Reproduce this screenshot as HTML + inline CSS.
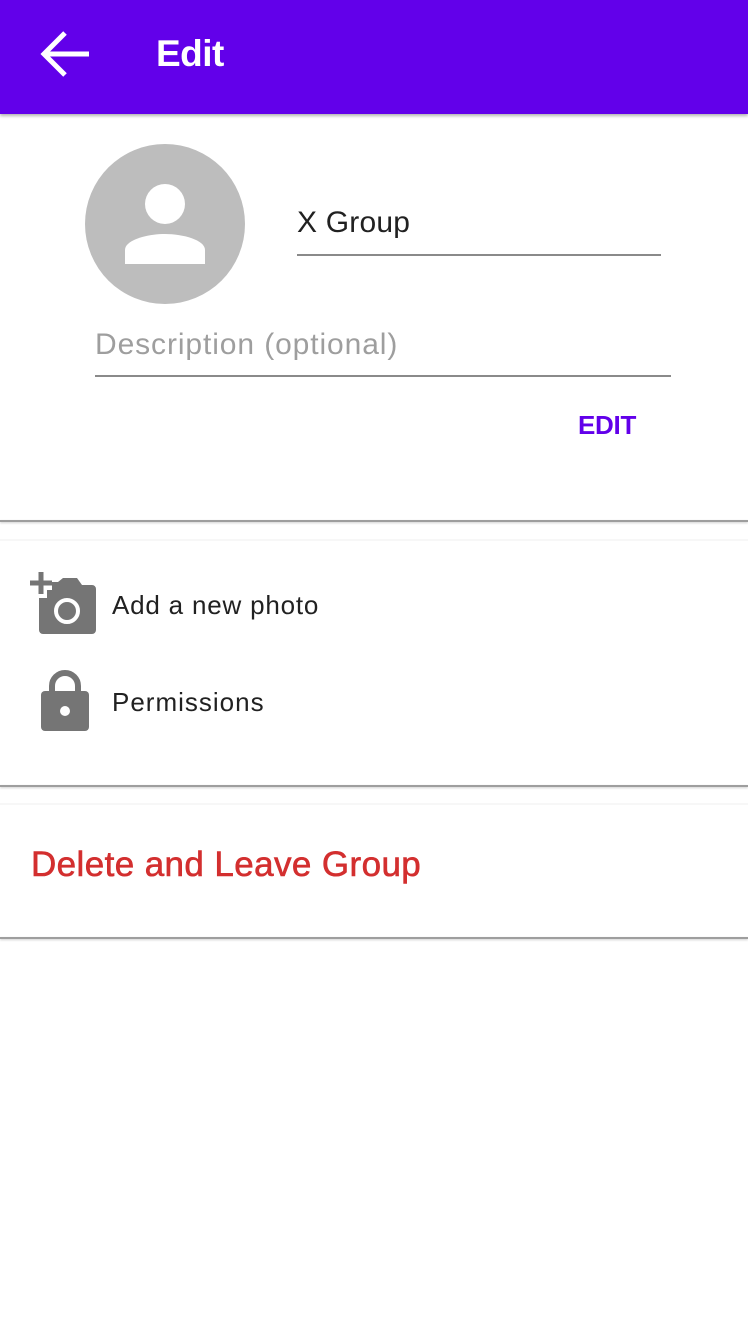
<!DOCTYPE html>
<html><head><style>
body{margin:0;width:748px;height:1324px;background:#fff;font-family:"Liberation Sans",sans-serif;position:relative;overflow:hidden}
.a{position:absolute}
.hdr{left:0;top:0;width:748px;height:114px;background:#6200ea;box-shadow:0 2px 3px rgba(0,0,0,.3)}
.sep{left:0;width:748px;height:2px;background:#9e9e9e;box-shadow:0 1px 2px rgba(0,0,0,.2)}
.faint{left:0;width:748px;height:2px;background:#f7f7f7}
</style></head><body>
<div class="a hdr"></div>
<svg class="a" style="left:40px;top:30px" width="52" height="50" viewBox="0 0 52 50"><path d="M3 24H49M25 3L4 24L25 45" stroke="#fff" stroke-width="5" fill="none"/></svg>
<div class="a" style="left:156px;top:33px;color:#fff;font-size:37px;font-weight:bold;letter-spacing:-0.5px">Edit</div>
<svg class="a" style="left:85px;top:144px" width="160" height="160"><circle cx="80" cy="80" r="80" fill="#bdbdbd"/><circle cx="80" cy="60" r="20" fill="#fff"/><path d="M40 120V106C40 96 62 90 80 90C98 90 120 96 120 106V120Z" fill="#fff"/></svg>
<div class="a" style="left:297px;top:206px;font-size:30px;color:#212121;letter-spacing:0.2px">X Group</div>
<div class="a" style="left:297px;top:254px;width:364px;height:2px;background:#8a8a8a"></div>
<div class="a" style="left:95px;top:328px;font-size:30px;color:#9e9e9e;letter-spacing:0.9px">Description (optional)</div>
<div class="a" style="left:95px;top:375px;width:576px;height:2px;background:#8a8a8a"></div>
<div class="a" style="left:578px;top:410px;font-size:26px;font-weight:bold;color:#6200ea;letter-spacing:-0.3px">EDIT</div>
<div class="a sep" style="top:520px"></div>
<div class="a faint" style="top:539px"></div>
<svg class="a" style="left:28px;top:570px" width="72" height="66"><path d="M2 10h22M13 -1v22" stroke="#757575" stroke-width="5" transform="translate(0,3)"/><path d="M24 12h6l5-4h14l5 7h10a4 4 0 0 1 4 4v41a4 4 0 0 1-4 4H15a4 4 0 0 1-4-4V28h8V20h5z" fill="#757575"/><circle cx="39" cy="41" r="11" fill="none" stroke="#fff" stroke-width="4"/></svg>
<div class="a" style="left:112px;top:590px;font-size:26px;color:#212121;letter-spacing:0.8px">Add a new photo</div>
<svg class="a" style="left:40px;top:669px" width="50" height="63"><path d="M12 24V17a13 13 0 0 1 26 0v7" stroke="#757575" stroke-width="6" fill="none"/><rect x="1" y="22" width="48" height="40" rx="4" fill="#757575"/><circle cx="25" cy="42" r="5" fill="#fff"/></svg>
<div class="a" style="left:112px;top:687px;font-size:26px;color:#212121;letter-spacing:1px">Permissions</div>
<div class="a sep" style="top:785px"></div>
<div class="a faint" style="top:803px"></div>
<div class="a" style="left:31px;top:845px;font-size:35px;color:#d32f2f;letter-spacing:0.4px;-webkit-text-stroke:0.6px #d32f2f">Delete and Leave Group</div>
<div class="a sep" style="top:937px"></div>
</body></html>
